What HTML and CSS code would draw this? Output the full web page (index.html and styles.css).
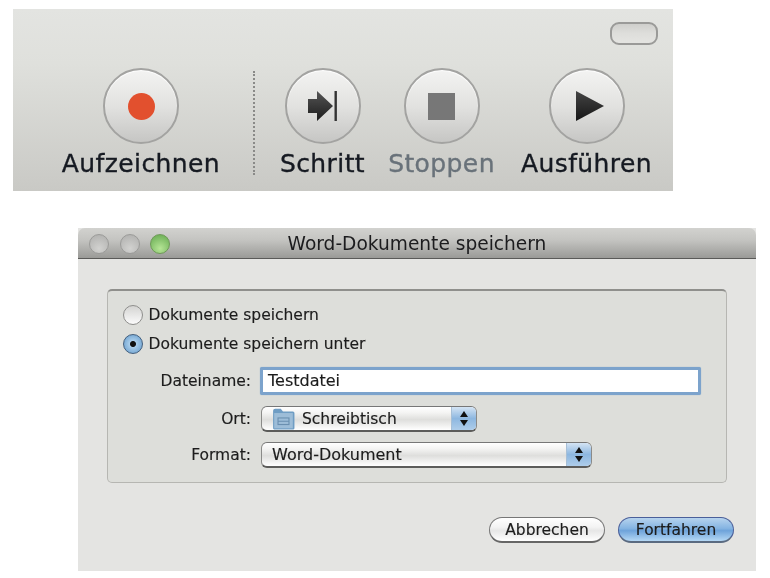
FILE: index.html
```html
<!DOCTYPE html>
<html lang="de">
<head>
<meta charset="utf-8">
<title>Word-Dokumente speichern</title>
<link rel="stylesheet" href="styles.css">
</head>
<body>
<div class="page">
  <section class="toolbar">
    <div class="toolbar-top"><span class="pill"></span></div>
    <div class="tools">
      <div class="tool tool-record">
        <span class="round"><span class="dot"></span></span>
        <span class="tool-label">Aufzeichnen</span>
      </div>
      <span class="divider"></span>
      <div class="tool tool-step">
        <span class="round">
          <svg class="glyph" width="32" height="30" viewBox="0 0 32 30"><defs><linearGradient id="g1" x1="0" y1="0" x2="0" y2="1"><stop offset="0" stop-color="#555"/><stop offset="1" stop-color="#1c1c1c"/></linearGradient></defs><path d="M1 8h9V0l16 15-16 15v-8H1z" fill="url(#g1)"/><rect x="27.500" y="0" width="2.400" height="30" fill="#333"/></svg>
        </span>
        <span class="tool-label">Schritt</span>
      </div>
      <div class="tool tool-stop">
        <span class="round"><span class="square"></span></span>
        <span class="tool-label muted">Stoppen</span>
      </div>
      <div class="tool tool-run">
        <span class="round">
          <svg class="glyph play" width="30" height="30" viewBox="0 0 30 30"><defs><linearGradient id="g2" x1="0" y1="0" x2="0" y2="1"><stop offset="0" stop-color="#444"/><stop offset="1" stop-color="#161616"/></linearGradient></defs><path d="M1 0l28 15L1 30z" fill="url(#g2)"/></svg>
        </span>
        <span class="tool-label">Ausführen</span>
      </div>
    </div>
  </section>

  <section class="window">
    <header class="titlebar">
      <span class="lights"><span class="light"></span><span class="light"></span><span class="light green"></span></span>
      <span class="title">Word-Dokumente speichern</span>
    </header>
    <div class="content">
      <div class="group">
        <div class="radio-row"><span class="radio"></span><span>Dokumente speichern</span></div>
        <div class="radio-row"><span class="radio on"></span><span>Dokumente speichern unter</span></div>
        <div class="form-row row-name">
          <span class="form-label">Dateiname:</span>
          <span class="input">Testdatei</span>
        </div>
        <div class="form-row row-place">
          <span class="form-label">Ort:</span>
          <span class="select select-short">
            <span class="select-text">
              <svg class="folder" width="23" height="23" viewBox="0 0 21 21"><path d="M1 3.500Q1 1.500 3 1.500h5l2 2.500h9q1.500 0 1.500 1.500v14q0 1-1 1H2q-1 0-1-1z" fill="#6f9dc4"/><rect x="2" y="5.500" width="17" height="14" fill="#9dbdd8"/><rect x="5.500" y="10" width="10" height="6" fill="none" stroke="#6a8fb0"/><path d="M5.500 13h10" stroke="#6a8fb0"/></svg>
              Schreibtisch
            </span>
            <span class="stepper"><i class="up"></i><i class="down"></i></span>
          </span>
        </div>
        <div class="form-row row-format">
          <span class="form-label">Format:</span>
          <span class="select select-long">
            <span class="select-text">Word-Dokument</span>
            <span class="stepper"><i class="up"></i><i class="down"></i></span>
          </span>
        </div>
      </div>
      <div class="actions">
        <span class="btn">Abbrechen</span>
        <span class="btn primary">Fortfahren</span>
      </div>
    </div>
  </section>
</div>
</body>
</html>
```
FILE: styles.css
```css
* { box-sizing: border-box; }
html, body { margin: 0; background: #fff; }
body { width: 770px; height: 578px; overflow: hidden; font-family: "DejaVu Sans", sans-serif; color: #1c1c1c; }
.page { padding: 9px 0 0 13px; filter: blur(0.45px); }

.toolbar { width: 660px; height: 182px; background: linear-gradient(#e3e4e1, #dfe0dc 30%, #c9c9c5); }
.toolbar-top { display: flex; justify-content: flex-end; padding: 13px 15px 0 0; height: 59px; }
.pill { width: 48px; height: 23px; border-radius: 9px; border: 2px solid #9a9a98; background: linear-gradient(#cfcfcc, #dededb 50%, #e4e4e1); }
.tools { display: flex; align-items: flex-start; padding-left: 48px; }
.tool { display: flex; flex-direction: column; align-items: center; }
.tool-record { width: 160px; margin-right: 32px; }
.tool-step { width: 83px; margin-right: 25px; }
.tool-stop { width: 105px; margin-right: 26px; }
.tool-run { width: 133px; }
.round { width: 76px; height: 76px; flex: none; border-radius: 50%; border: 2px solid #a3a3a1; background: linear-gradient(#f3f3f2, #e2e2e0 50%, #c6c6c4); display: flex; align-items: center; justify-content: center; box-shadow: inset 0 1px 1px #fff; }
.dot { width: 27px; height: 27px; border-radius: 50%; background: #e2502e; }
.square { width: 27px; height: 27px; background: #777; }
.play { margin-left: 6px; }
.tool-label { font-size: 25px; line-height: 30px; margin-top: 5px; white-space: nowrap; color: #161a22; letter-spacing: 0.400px; -webkit-text-stroke: 0.35px currentColor; }
.muted { color: #69727a; }
.divider { width: 2px; height: 104px; margin: 3px 26px 0 0; border-left: 2px dotted #8a8a88; }

.window { width: 678px; height: 343px; margin: 37px 0 0 65px; background: #e4e4e2; }
.titlebar { position: relative; height: 31px; border-radius: 7px 7px 0 0; background: linear-gradient(#d2d2cf, #c4c4c1 40%, #9a9a97); border-bottom: 1px solid #5a5a58; display: flex; align-items: center; justify-content: center; }
.lights { position: absolute; left: 11px; top: 6px; display: flex; gap: 10.500px; }
.light { width: 20px; height: 20px; border-radius: 50%; border: 1px solid #9b9b99; background: radial-gradient(circle at 50% 75%, #d2d2d0, #aeaeac); }
.light.green { border-color: #6f9a58; background: radial-gradient(circle at 50% 75%, #b6e596, #63a84e); }
.title { font-size: 18.600px; color: #1c1c1e; }
.content { padding: 30px 29px 0; }
.group { width: 620px; height: 194px; border: 1px solid #b6b6b2; border-top: 2px solid #8f8f8c; border-radius: 5px; background: #dddeda; padding: 9px 0 0 15px; font-size: 15.500px; -webkit-text-stroke: 0.15px currentColor; }
.radio-row { display: flex; align-items: center; gap: 5.500px; height: 29px; }
.radio { width: 20px; height: 20px; border-radius: 50%; border: 1.500px solid #8e8e8c; background: linear-gradient(#d4d4d2, #fbfbfb); flex: none; }
.radio.on { border-color: #44607e; background: radial-gradient(circle, #111 0 2.500px, #a9cdea 3.500px, #5f97c9 100%); }
.form-row { display: flex; align-items: center; gap: 9px; margin-left: -15px; }
.form-label { width: 143px; text-align: right; flex: none; }
.row-name { margin-top: 9px; height: 28px; }
.row-place { margin-top: 11px; height: 26px; }
.row-format { margin-top: 10px; height: 26px; }
.input { width: 441px; height: 28px; background: #fff; border: 3px solid #7ca3cc; border-radius: 2px; padding-left: 5px; line-height: 22px; font-size: 16px; box-shadow: 0 0 1px #7ca3cc; }
.select { height: 26px; margin-left: 1px; display: flex; border-radius: 6px; border: 1px solid #8b8b89; border-top-color: #777; border-bottom: 2px solid #5c5c5a; background: linear-gradient(#fff, #f4f4f3 25%, #dededc 55%, #fff); overflow: hidden; }
.select-short { width: 216px; }
.select-long { width: 331px; font-size: 16px; }
.select-text { flex: 1; display: flex; align-items: center; gap: 7px; padding-left: 10px; }
.folder { flex: none; }
.stepper { width: 25px; display: flex; flex-direction: column; align-items: center; justify-content: center; gap: 3px; background: linear-gradient(#d4e4f4, #8db7e0 50%, #aecdea); border-left: 1px solid #a7bfd6; }
.stepper i { width: 0; height: 0; border-left: 4px solid transparent; border-right: 4px solid transparent; }
.stepper .up { border-bottom: 6px solid #111; }
.stepper .down { border-top: 6px solid #111; }

.actions { display: flex; justify-content: flex-end; gap: 13px; margin-top: 34px; margin-right: -7px; }
.btn { width: 116px; height: 26px; border-radius: 13px; border: 1px solid #777; border-bottom: 2px solid #666; background: linear-gradient(#fff, #f3f3f3 40%, #e6e6e6 55%, #fff); text-align: center; font-size: 15.500px; line-height: 24px; -webkit-text-stroke: 0.15px currentColor; }
.btn.primary { border-color: #4a5f9a; border-bottom-color: #5a6a80; background: linear-gradient(#b6d3ee, #85b4e2 45%, #6ea3da 55%, #b5d8f5); }
```
